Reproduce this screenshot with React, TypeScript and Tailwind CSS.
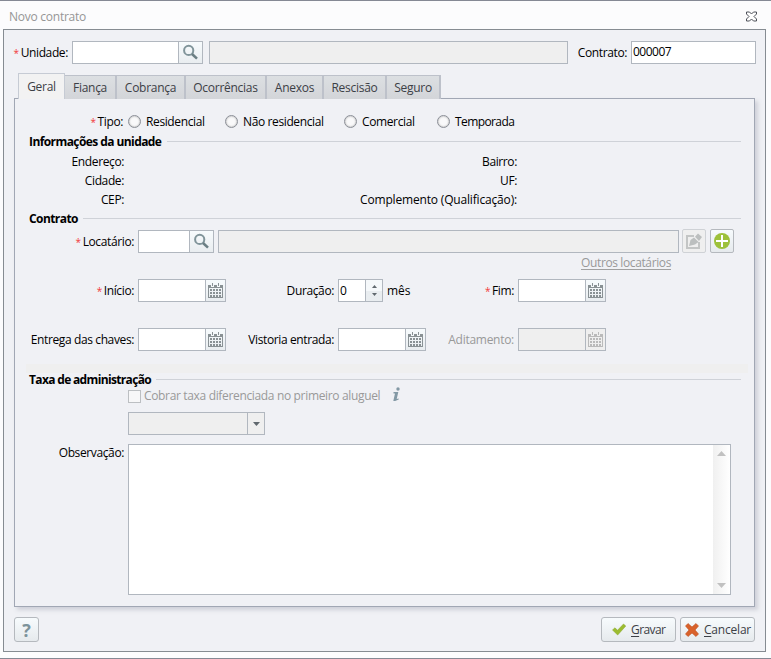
import React, { useState } from 'react';
import clsx from 'clsx';

type LabelProps = {
  children: React.ReactNode;
  className?: string;
  required?: boolean;
};

const Label: React.FC<LabelProps> = ({ children, className, required }) => (
  <label className={clsx('shrink-0 whitespace-nowrap text-right', className)}>
    {required && <span className="mr-[2px] text-[10px] text-[#f23a3a]">*</span>}
    {children}
  </label>
);

const SearchIcon = () => (
  <svg width="17" height="17" viewBox="0 0 17 17" fill="none">
    <circle cx="6.7" cy="6.4" r="4.6" stroke="#80949a" strokeWidth="2" />
    <path d="M10 10l5 4.6" stroke="#6b7f84" strokeWidth="2.6" />
  </svg>
);

const CalendarIcon = ({ color }: { color: string }) => (
  <svg width="15" height="15" viewBox="0 0 15 15" shapeRendering="crispEdges">
    <path d="M0 2h3v2h3V2h3v2h3V2h3v13H0zM1 5v9h13V5z" fill={color} fillRule="evenodd" />
    <path d="M4 0h1v3H4zM10 0h1v3h-1z" fill={color} />
    {[6, 9, 12].map((y) =>
      [2, 5, 8, 11].map((x) => <rect key={`${x}-${y}`} x={x} y={y} width="2" height="2" fill={color} />)
    )}
  </svg>
);

const SearchInput = ({ className }: { className: string }) => (
  <div className={clsx('flex h-[23px] shrink-0 border border-[#b1b7bf] bg-white', className)}>
    <input className="min-w-0 flex-1 px-1 outline-none" />
    <button
      type="button"
      className="flex w-6 items-center justify-center border-l border-[#b1b7bf] bg-linear-to-b from-[#f7fbfd] to-[#e9edf0]"
    >
      <SearchIcon />
    </button>
  </div>
);

const DateInput = ({ className, disabled }: { className?: string; disabled?: boolean }) => (
  <div
    className={clsx(
      'flex h-[23px] w-[88px] shrink-0 border border-[#b1b7bf]',
      disabled ? 'bg-[#efefef]' : 'bg-white',
      className
    )}
  >
    <input className="min-w-0 flex-1 px-1 outline-none" disabled={disabled} />
    <button
      type="button"
      disabled={disabled}
      className={clsx(
        'flex w-5 items-center justify-center border-l border-[#b1b7bf]',
        !disabled && 'bg-linear-to-b from-[#f7fbfd] to-[#e9edf0]'
      )}
    >
      <CalendarIcon color={disabled ? '#bababa' : '#899194'} />
    </button>
  </div>
);

const SectionTitle = ({ children, className }: { children: React.ReactNode; className: string }) => (
  <div className="flex h-[19px] items-center pr-[13px] pl-[14px]">
    <h2 className={clsx('shrink-0 font-bold whitespace-nowrap', className)}>{children}</h2>
    <div className="h-px flex-1 bg-[#cfd2d8]" />
  </div>
);

const tabs = [
  { name: 'Geral', width: 'w-[47px]' },
  { name: 'Fiança', width: 'w-[52px]' },
  { name: 'Cobrança', width: 'w-[69px]' },
  { name: 'Ocorrências', width: 'w-[81px]' },
  { name: 'Anexos', width: 'w-[57px]' },
  { name: 'Rescisão', width: 'w-[63px]' },
  { name: 'Seguro', width: 'w-[54px]' },
];

const tipos = [
  { name: 'Residencial', width: 'w-[97px]' },
  { name: 'Não residencial', width: 'w-[119px]' },
  { name: 'Comercial', width: 'w-[93px]' },
  { name: 'Temporada', width: 'w-[90px] tracking-[-0.6px]' },
];

const info = [
  ['Endereço:', 'Bairro:'],
  ['Cidade:', 'UF:'],
  ['CEP:', 'Complemento (Qualificação):'],
];

const App: React.FC = () => {
  const [tab, setTab] = useState('Geral');
  const [tipo, setTipo] = useState('');

  return (
    <div className="flex h-[659px] w-[771px] flex-col overflow-hidden border-y border-[#858994] bg-[#fcfcfd] font-['Open_Sans','Noto_Sans',sans-serif] text-[12px] leading-[18px] tracking-[-0.38px] text-black">
      <header className="flex h-7 shrink-0 items-center justify-between pt-[3px] pr-[13px] pl-[9px] text-[#969696]">
        <span className="tracking-[-0.25px]">Novo contrato</span>
        <button type="button">
          <svg width="13" height="11" viewBox="0 0 13 11" fill="#fff" stroke="#4d5058">
            <path d="M1.5 1h3l2 2 2-2h3v2L9 5.5 11.5 8v2h-3l-2-2-2 2h-3V8L4 5.5 1.5 3z" />
          </svg>
        </button>
      </header>

      <main className="ml-[3px] flex h-[623px] w-[763px] shrink-0 flex-col border border-[#868c92] bg-[#f0f1f5] pt-[11px]">
        <div className="flex h-[23px] shrink-0 items-center">
          <Label className="w-16" required>
            Unidade:
          </Label>
          <SearchInput className="ml-1 w-[131px]" />
          <div className="ml-1.5 h-[23px] w-[359px] border border-[#b1b7bf] bg-[#efefef]" />
          <Label className="w-[59px]">Contrato:</Label>
          <input
            className="ml-1 h-[23px] w-[125px] border border-[#b1b7bf] bg-white px-px pb-[3px] tracking-[-0.5px] outline-none"
            defaultValue="000007"
          />
        </div>

        <nav className="relative z-10 mt-[9px] ml-[14px] flex h-[26px] shrink-0 items-end tracking-[-0.27px]">
          {tabs.map(({ name, width }) => (
            <button
              key={name}
              type="button"
              onClick={() => setTab(name)}
              className={clsx(
                'border-t border-r text-center text-[#3c4046]',
                width,
                tab === name
                  ? 'h-[26px] border-l border-[#c6cbd4] bg-[#f2f2f2]'
                  : 'h-6 border-r-2 border-[#bdc1ca] bg-linear-to-b from-[#dcdfe2] to-[#d3d5d9]'
              )}
            >
              {name}
            </button>
          ))}
        </nav>

        <section className="-mt-px ml-[10px] flex h-[509px] w-[741px] shrink-0 flex-col border border-[#a1a7b4] shadow-[3px_3px_4px_rgba(110,115,135,0.25)]">
          <div className="mt-3 flex h-[21px] shrink-0 items-center">
            <Label className="w-[108px]" required>
              Tipo:
            </Label>
            <div className="ml-[5px] flex">
              {tipos.map(({ name, width }) => (
                <label key={name} className={clsx('flex items-center gap-[5px] whitespace-nowrap', width)}>
                  <input
                    type="radio"
                    name="tipo"
                    checked={tipo === name}
                    onChange={() => setTipo(name)}
                    className="size-[13px] appearance-none rounded-full border border-[#8b8f97] bg-[#f9f9fa] shadow-[inset_0_0_2px_#999] checked:bg-[#8b8f97]"
                  />
                  {name}
                </label>
              ))}
            </div>
          </div>

          <SectionTitle className="w-[138px] tracking-[-0.58px]">Informações da unidade</SectionTitle>
          <div className="h-[58px] pt-[1px]">
            {info.map(([left, right]) => (
              <div key={left} className="flex h-[19px] items-center">
                <Label className="w-[109px]">{left}</Label>
                <Label className={clsx('w-[393px]', right.length > 10 && 'tracking-[-0.17px]')}>{right}</Label>
              </div>
            ))}
          </div>

          <SectionTitle className="w-[54px] tracking-[-0.58px]">Contrato</SectionTitle>
          <div className="mt-0.5 flex h-[23px] shrink-0 items-center">
            <Label className="w-[119px]" required>
              Locatário:
            </Label>
            <SearchInput className="ml-1 w-[76px]" />
            <div className="ml-1 h-[23px] w-[461px] shrink-0 border border-[#b1b7bf] bg-[#efefef]" />
            <button
              type="button"
              disabled
              className="-mt-px ml-[3px] flex size-6 shrink-0 items-center justify-center self-start rounded-[2px] border border-[#cfd2d6] bg-[#efefef]"
            >
              <svg width="16" height="17" viewBox="0 0 16 17">
                <path d="M8 2H0v14h14V9h-2v5H2V4h6z" fill="#c3c5c5" />
                <path d="M3 13l1.500-6L8 4.500 12.500 9 9 11.500zM9 3.800L12 .5 16 4l-3 4z" fill="#bcbfbf" />
              </svg>
            </button>
            <button
              type="button"
              className="-mt-px ml-1 flex size-6 shrink-0 items-center justify-center self-start rounded-[2px] border border-[#b5b9be] bg-linear-to-b from-[#f7fbfd] to-[#e6eaed]"
            >
              <svg width="16" height="16" viewBox="0 0 16 16">
                <circle cx="8" cy="8" r="8" fill="#9dc13b" />
                <path d="M7 2h2v5h5v2H9v5H7V9H2V7h5z" fill="#fff" />
              </svg>
            </button>
          </div>
          <div className="mt-px flex h-[18px] w-[656px] justify-end">
            <a className="h-[16px] border-b border-[#a0a0a0] leading-[18px] text-[#999]">Outros locatários</a>
          </div>

          <div className="mt-[7px] flex h-[23px] shrink-0 items-center">
            <Label className="w-[119px]" required>
              Início:
            </Label>
            <DateInput className="ml-1" />
            <Label className="w-[108px]">Duração:</Label>
            <div className="ml-1 flex h-[23px] w-[45px] border border-[#b1b7bf] bg-white">
              <input className="w-[26px] px-px outline-none" defaultValue="0" />
              <div className="flex flex-1 flex-col border-l border-[#b1b7bf]">
                <button type="button" className="flex flex-1 items-center justify-center bg-[#f5f8fa] pt-0.5">
                  <svg width="5" height="3">
                    <path d="M0 3l2.500-3L5 3z" fill="#60686e" />
                  </svg>
                </button>
                <button type="button" className="flex flex-1 items-center justify-center bg-[#e9edf0] pb-0.5">
                  <svg width="5" height="3">
                    <path d="M0 0h5L2.500 3z" fill="#60686e" />
                  </svg>
                </button>
              </div>
            </div>
            <span className="ml-1 w-[29px] tracking-[-0.1px]">mês</span>
            <Label className="w-[98px]" required>
              Fim:
            </Label>
            <DateInput className="ml-1" />
          </div>

          <div className="mt-[26px] flex h-[23px] shrink-0 items-center">
            <Label className="w-[119px]">Entrega das chaves:</Label>
            <DateInput className="ml-1" />
            <Label className="w-[108px]">Vistoria entrada:</Label>
            <DateInput className="ml-1" />
            <Label className="w-[88px] tracking-[-0.28px] text-[#999]">Aditamento:</Label>
            <DateInput className="ml-1" disabled />
          </div>

          <div className="mt-[13px] ml-[11px] h-[9px] w-[722px] shrink-0 bg-[#efefef]" />
          <div className="-mt-[3px]">
            <SectionTitle className="w-[127px] tracking-[-0.66px]">Taxa de administração</SectionTitle>
          </div>
          <div className="-mt-px ml-[113px] flex h-4 shrink-0 items-center text-[#999]">
            <input
              type="checkbox"
              disabled
              className="mr-[3px] size-[13px] appearance-none border border-[#bcbfc2] bg-[#f7f7f8]"
            />
            <span className="w-[248px] tracking-[-0.34px]">Cobrar taxa diferenciada no primeiro aluguel</span>
            <svg width="9" height="15" viewBox="0 0 9 15" fill="#8399a5" className="-mt-1">
              <circle cx="6" cy="2" r="1.700" />
              <path d="M1.500 5h4.800L4.700 12l2-.6v1L3.200 14H1.300L3 6.500H1.500z" />
            </svg>
          </div>
          <div className="mt-2 ml-[113px] flex h-[23px] w-[137px] shrink-0 border border-[#b1b7bf] bg-[#efefef]">
            <div className="flex-1" />
            <div className="flex w-[17px] items-center justify-center border-l border-[#b1b7bf]">
              <svg width="7" height="4">
                <path d="M0 0h7L3.500 4z" fill="#60686e" />
              </svg>
            </div>
          </div>

          <div className="mt-[9px] flex shrink-0">
            <Label className="w-[109px]">Observação:</Label>
            <div className="ml-1 flex h-[151px] w-[603px] border border-[#b1b7bf] bg-white">
              <textarea className="flex-1 resize-none px-1 outline-none" />
              <div className="flex w-[17px] flex-col items-center justify-between bg-linear-to-r from-[#f0f0f0] to-white py-1.5">
                <svg width="9" height="5">
                  <path d="M0 5l4.500-5L9 5z" fill="#c1c1c1" />
                </svg>
                <svg width="9" height="5">
                  <path d="M0 0h9L4.500 5z" fill="#c1c1c1" />
                </svg>
              </div>
            </div>
          </div>
        </section>

        <footer className="mt-[10px] flex h-[25px] shrink-0 gap-1 pr-[10px] pl-[10px] tracking-[-0.2px] text-[#3c4046]">
          <button
            type="button"
            className="mr-auto flex w-[25px] items-center justify-center rounded-[3px] border border-[#b5b9be] bg-linear-to-b from-[#f7fbfd] to-[#e6eaed] text-[18px] font-bold text-[#7d939b]"
          >
            ?
          </button>
          <button
            type="button"
            className="flex w-[75px] items-center rounded-[3px] border border-[#b5b9be] bg-linear-to-b from-[#f7fbfd] to-[#e6eaed] pl-[10px]"
          >
            <svg width="14" height="13" viewBox="0 0 14 13" className="mr-[5px]">
              <path d="M.5 7L3 4.800l2.500 2.500L11.500 1 13.800 3 5.700 12z" fill="#9cbc30" stroke="#87a72b" strokeWidth=".5" />
            </svg>
            <span className="tracking-[-0.6px]">
              <u className="underline-offset-2">G</u>ravar
            </span>
          </button>
          <button
            type="button"
            className="flex w-[75px] items-center rounded-[3px] border border-[#b5b9be] bg-linear-to-b from-[#f7fbfd] to-[#e6eaed] pl-1"
          >
            <svg width="14" height="14" viewBox="0 0 14 14" className="mr-[5px]">
              <path
                d="M3 .5L7 4 11 .5 13.500 3 10 7l3.500 4L11 13.500 7 10l-4 3.500L.5 11 4 7 .5 3z"
                fill="#d9622b"
                stroke="#c04f20"
                strokeWidth=".6"
              />
            </svg>
            <span>
              <u className="underline-offset-2">C</u>ancelar
            </span>
          </button>
        </footer>
      </main>
    </div>
  );
};

export default App;
